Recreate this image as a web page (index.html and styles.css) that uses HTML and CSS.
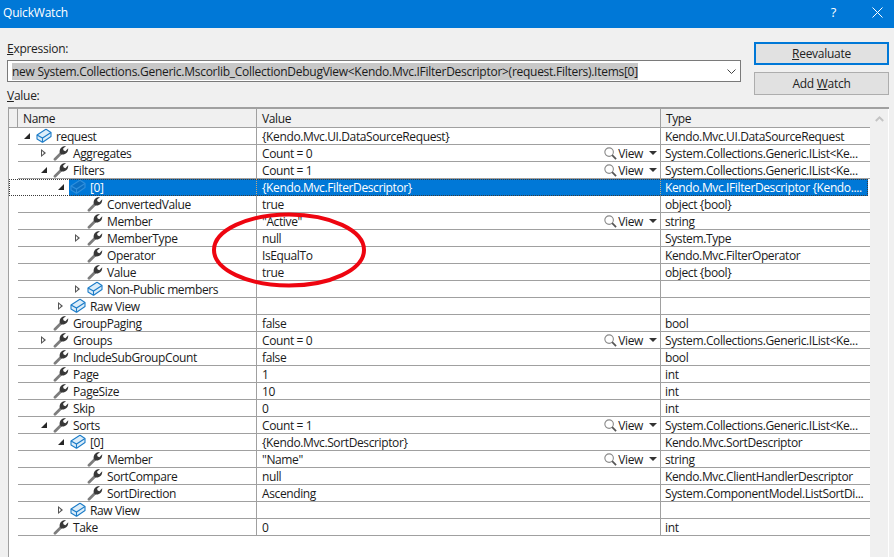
FILE: index.html
```html
<!DOCTYPE html>
<html lang="en">
<head>
<meta charset="utf-8">
<title>QuickWatch</title>
<link rel="stylesheet" href="styles.css">
</head>
<body>
<svg class="defs" width="0" height="0" aria-hidden="true">
  <symbol id="wrench" viewBox="0 0 16 16">
    <path d="M2 14.2 L8 8.2" stroke="#7d7d7d" stroke-width="2.8" stroke-linecap="round" fill="none"/>
    <path d="M6.8 8 C6 4 8.8 0.8 13 1 L10 3.8 L10.7 5.5 L12.4 6.2 L15.2 3.2 C15.5 7.4 12.4 10 8.4 9.4 Z" fill="#383838"/>
  </symbol>
  <symbol id="cube" viewBox="0 0 16 16">
    <path d="M1 7 L9.5 1.5 Q10 1.2 10.5 1.5 L15 4.5 V8.5 L7 14 Q6.5 14.3 6 14 L1 11 Z" fill="#dcedf9" stroke="#1c7cc8" stroke-width="1.1" stroke-linejoin="round"/>
    <path d="M1 7 L6.5 10 L15 4.5 M6.5 10 V14" fill="none" stroke="#1c7cc8" stroke-width="1.1"/>
  </symbol>
  <symbol id="cube-sel" viewBox="0 0 16 16">
    <path d="M1 7 L9.5 1.5 Q10 1.2 10.5 1.5 L15 4.5 V8.5 L7 14 Q6.5 14.3 6 14 L1 11 Z" fill="#0a6fc4" stroke="#2f8fdc" stroke-width="1.1" stroke-linejoin="round"/>
    <path d="M1 7 L6.5 10 L15 4.5 M6.5 10 V14" fill="none" stroke="#2f8fdc" stroke-width="1.1"/>
  </symbol>
  <symbol id="lens" viewBox="0 0 14 14">
    <circle cx="5.5" cy="5.5" r="4.6" fill="#fff" stroke="#8a8a8a" stroke-width="1.2"/>
    <path d="M8.8 8.8 L13 13" stroke="#555" stroke-width="1.9"/>
  </symbol>
</svg>

<header class="titlebar">
  <span class="title">QuickWatch</span>
  <span class="help">?</span>
  <svg class="close" width="11" height="11" viewBox="0 0 11 11"><path d="M.5 .5 L10.5 10.5 M10.5 .5 L.5 10.5" stroke="#fff" stroke-width="1" fill="none"/></svg>
</header>

<main class="dialog">
  <section class="top">
    <div class="fields">
      <label class="label expr-label"><u>E</u>xpression:</label>
      <div class="combo">
        <span class="expr">new System.Collections.Generic.Mscorlib_CollectionDebugView&lt;Kendo.Mvc.IFilterDescriptor&gt;(request.Filters).Items[0]</span>
        <svg class="chev" width="9" height="5" viewBox="0 0 9 5"><path d="M.5 .5 L4.5 4.5 L8.5 .5" stroke="#444" fill="none"/></svg>
      </div>
      <label class="label value-label"><u>V</u>alue:</label>
    </div>
    <div class="buttons">
      <button class="btn primary"><u>R</u>eevaluate</button>
      <button class="btn">Add <u>W</u>atch</button>
    </div>
  </section>

  <section class="grid">
    <div class="rows">
      <div class="row head">
        <div class="gut"></div><div class="c name">Name</div><div class="c val">Value</div><div class="c typ">Type</div>
      </div>

      <div class="row"><div class="gut"></div><div class="c name d0"><i class="tw open"></i><svg class="ic"><use href="#cube"/></svg>request</div><div class="c val">{Kendo.Mvc.UI.DataSourceRequest}</div><div class="c typ">Kendo.Mvc.UI.DataSourceRequest</div></div>
      <div class="row"><div class="gut"></div><div class="c name d1"><i class="tw shut"></i><svg class="ic"><use href="#wrench"/></svg>Aggregates</div><div class="c val">Count = 0<span class="view"><svg class="lens"><use href="#lens"/></svg>View<i class="drop"></i></span></div><div class="c typ">System.Collections.Generic.IList&lt;Ke...</div></div>
      <div class="row"><div class="gut"></div><div class="c name d1"><i class="tw open"></i><svg class="ic"><use href="#wrench"/></svg>Filters</div><div class="c val">Count = 1<span class="view"><svg class="lens"><use href="#lens"/></svg>View<i class="drop"></i></span></div><div class="c typ">System.Collections.Generic.IList&lt;Ke...</div></div>
      <div class="row sel"><div class="gut"></div><div class="c name d2"><i class="tw open"></i><span class="hl"><svg class="ic"><use href="#cube-sel"/></svg>[0]</span></div><div class="c val">{Kendo.Mvc.FilterDescriptor}</div><div class="c typ">Kendo.Mvc.IFilterDescriptor {Kendo....</div></div>
      <div class="row"><div class="gut"></div><div class="c name d3"><i class="tw"></i><svg class="ic"><use href="#wrench"/></svg>ConvertedValue</div><div class="c val">true</div><div class="c typ">object {bool}</div></div>
      <div class="row"><div class="gut"></div><div class="c name d3"><i class="tw"></i><svg class="ic"><use href="#wrench"/></svg>Member</div><div class="c val">"Active"<span class="view"><svg class="lens"><use href="#lens"/></svg>View<i class="drop"></i></span></div><div class="c typ">string</div></div>
      <div class="row"><div class="gut"></div><div class="c name d3"><i class="tw shut"></i><svg class="ic"><use href="#wrench"/></svg>MemberType</div><div class="c val">null</div><div class="c typ">System.Type</div></div>
      <div class="row"><div class="gut"></div><div class="c name d3"><i class="tw"></i><svg class="ic"><use href="#wrench"/></svg>Operator</div><div class="c val">IsEqualTo</div><div class="c typ">Kendo.Mvc.FilterOperator</div></div>
      <div class="row"><div class="gut"></div><div class="c name d3"><i class="tw"></i><svg class="ic"><use href="#wrench"/></svg>Value</div><div class="c val">true</div><div class="c typ">object {bool}</div></div>
      <div class="row"><div class="gut"></div><div class="c name d3"><i class="tw shut"></i><svg class="ic"><use href="#cube"/></svg>Non-Public members</div><div class="c val"></div><div class="c typ"></div></div>
      <div class="row"><div class="gut"></div><div class="c name d2"><i class="tw shut"></i><svg class="ic"><use href="#cube"/></svg>Raw View</div><div class="c val"></div><div class="c typ"></div></div>
      <div class="row"><div class="gut"></div><div class="c name d1"><i class="tw"></i><svg class="ic"><use href="#wrench"/></svg>GroupPaging</div><div class="c val">false</div><div class="c typ">bool</div></div>
      <div class="row"><div class="gut"></div><div class="c name d1"><i class="tw shut"></i><svg class="ic"><use href="#wrench"/></svg>Groups</div><div class="c val">Count = 0<span class="view"><svg class="lens"><use href="#lens"/></svg>View<i class="drop"></i></span></div><div class="c typ">System.Collections.Generic.IList&lt;Ke...</div></div>
      <div class="row"><div class="gut"></div><div class="c name d1"><i class="tw"></i><svg class="ic"><use href="#wrench"/></svg>IncludeSubGroupCount</div><div class="c val">false</div><div class="c typ">bool</div></div>
      <div class="row"><div class="gut"></div><div class="c name d1"><i class="tw"></i><svg class="ic"><use href="#wrench"/></svg>Page</div><div class="c val">1</div><div class="c typ">int</div></div>
      <div class="row"><div class="gut"></div><div class="c name d1"><i class="tw"></i><svg class="ic"><use href="#wrench"/></svg>PageSize</div><div class="c val">10</div><div class="c typ">int</div></div>
      <div class="row"><div class="gut"></div><div class="c name d1"><i class="tw"></i><svg class="ic"><use href="#wrench"/></svg>Skip</div><div class="c val">0</div><div class="c typ">int</div></div>
      <div class="row"><div class="gut"></div><div class="c name d1"><i class="tw open"></i><svg class="ic"><use href="#wrench"/></svg>Sorts</div><div class="c val">Count = 1<span class="view"><svg class="lens"><use href="#lens"/></svg>View<i class="drop"></i></span></div><div class="c typ">System.Collections.Generic.IList&lt;Ke...</div></div>
      <div class="row"><div class="gut"></div><div class="c name d2"><i class="tw open"></i><svg class="ic"><use href="#cube"/></svg>[0]</div><div class="c val">{Kendo.Mvc.SortDescriptor}</div><div class="c typ">Kendo.Mvc.SortDescriptor</div></div>
      <div class="row"><div class="gut"></div><div class="c name d3"><i class="tw"></i><svg class="ic"><use href="#wrench"/></svg>Member</div><div class="c val">"Name"<span class="view"><svg class="lens"><use href="#lens"/></svg>View<i class="drop"></i></span></div><div class="c typ">string</div></div>
      <div class="row"><div class="gut"></div><div class="c name d3"><i class="tw"></i><svg class="ic"><use href="#wrench"/></svg>SortCompare</div><div class="c val">null</div><div class="c typ">Kendo.Mvc.ClientHandlerDescriptor</div></div>
      <div class="row"><div class="gut"></div><div class="c name d3"><i class="tw"></i><svg class="ic"><use href="#wrench"/></svg>SortDirection</div><div class="c val">Ascending</div><div class="c typ">System.ComponentModel.ListSortDi...</div></div>
      <div class="row"><div class="gut"></div><div class="c name d2"><i class="tw shut"></i><svg class="ic"><use href="#cube"/></svg>Raw View</div><div class="c val"></div><div class="c typ"></div></div>
      <div class="row"><div class="gut"></div><div class="c name d1"><i class="tw"></i><svg class="ic"><use href="#wrench"/></svg>Take</div><div class="c val">0</div><div class="c typ">int</div></div>
    </div>
    <aside class="scroll">
      <svg width="9" height="6" viewBox="0 0 9 6"><path d="M.8 5 L4.5 1.4 L8.2 5" stroke="#c4c4c4" stroke-width="2" fill="none"/></svg>
    </aside>
  </section>
</main>

<svg class="circle" width="170" height="90" viewBox="0 0 170 90" aria-hidden="true">
  <ellipse cx="85" cy="45" rx="75" ry="35.5" fill="none" stroke="#ee0510" stroke-width="4"/>
</svg>
</body>
</html>
```

FILE: styles.css
```css
* { box-sizing: border-box; }
html, body { margin: 0; height: 100%; }
body {
  position: relative;
  height: 557px;
  overflow: hidden;
  background: #f0f0f0;
  color: #1a1a1a;
  font: 12px/17px "Open Sans", "Noto Sans", sans-serif;
  letter-spacing: -0.27px;
}
.defs { position: absolute; }
.titlebar {
  height: 28px;
  background: #0078d7;
  color: #fff;
  display: flex;
  align-items: center;
  padding: 0 11px 4px 3px;
}
.title { font-size: 12px; flex: 1; letter-spacing: -0.2px; }
.help { font-size: 13px; margin-right: 36px; }
.dialog { padding: 14px 5px 0 7px; }
.top { display: flex; justify-content: space-between; height: 65px; }
.fields { width: 734px; }
.label { display: block; height: 18px; color: #222; }
.expr-label { line-height: 13px; }
.combo {
  height: 22px;
  background: #fff;
  border: 1px solid #7a7a7a;
  display: flex;
  align-items: center;
  justify-content: space-between;
  padding: 0 4px 0 4px;
}
.expr { background: #c8c8c8; white-space: nowrap; line-height: 17px; }
.chev { flex: none; }
.value-label { margin-top: 5px; }
.buttons { width: 135px; display: flex; flex-direction: column; gap: 7px; }
.btn {
  height: 23px;
  padding: 0;
  background: #e1e1e1;
  border: 1px solid #adadad;
  color: #222;
  font: inherit;
  letter-spacing: inherit;
}
.btn.primary { border: 2px solid #0078d7; }
.grid {
  display: flex;
  margin-left: 1px;
  height: 450px;
  background: #fff;
  border-top: 2px solid #a0a0a0;
  border-left: 1px solid #a0a0a0;
}
.rows { width: 861px; letter-spacing: -0.38px; }
.scroll {
  width: 18px;
  background: #f0f0f0;
  display: flex;
  justify-content: center;
  align-items: flex-start;
  padding-top: 7px;
}
.row {
  display: grid;
  grid-template-columns: 9px 239px 404px 209px;
  height: 17px;
}
.gut { height: 100%; }
.c {
  display: flex;
  align-items: center;
  height: 17px;
  white-space: nowrap;
  overflow: hidden;
  border-bottom: 1px solid #a0a0a0;
}
.name { border-right: 1px solid #a0a0a0; }
.val { border-right: 1px solid #a0a0a0; padding-left: 5px; }
.typ { padding-left: 4px; }
.row.head { height: 19px; background: #f0f0f0; }
.head .gut { border-right: 1px solid #a0a0a0; border-bottom: 1px solid #a0a0a0; }
.head .c { height: 19px; }
.head .name { padding-left: 5px; }
.head .typ { padding-left: 5px; }
.d0 { padding-left: 6px; }
.d1 { padding-left: 23px; }
.d2 { padding-left: 40px; }
.d3 { padding-left: 57px; }
.tw { flex: none; width: 12px; height: 9px; position: relative; display: block; }
.tw.open::before {
  content: "";
  position: absolute;
  left: 0; top: 1px;
  border-style: solid;
  border-width: 0 0 6px 6px;
  border-color: transparent transparent #262626 transparent;
}
.tw.shut::before {
  content: "";
  position: absolute;
  left: 0; top: 0;
  border-style: solid;
  border-width: 4px 0 4px 5px;
  border-color: transparent transparent transparent #555;
}
.tw.shut::after {
  content: "";
  position: absolute;
  left: 1px; top: 2px;
  border-style: solid;
  border-width: 2px 0 2px 2.5px;
  border-color: transparent transparent transparent #fff;
}
.ic { flex: none; width: 16px; height: 16px; margin-right: 4px; }
.view { margin-left: auto; display: flex; align-items: center; padding-right: 3px; }
.lens { width: 13px; height: 13px; margin-right: 1px; }
.drop {
  margin-left: 6px;
  border-style: solid;
  border-width: 4px 4px 0 4px;
  border-color: #333 transparent transparent transparent;
}
.row.sel {
  grid-template-columns: 9px 239px 404px 207px;
  margin-right: 2px;
  background: linear-gradient(#0078d7, #0078d7) no-repeat 60px 0 / 100% 100%;
  color: #fff;
  outline: 1px dotted #3a3a3a;
  outline-offset: -1px;
}
.sel .c { border-bottom-color: transparent; }
.sel .name, .sel .val { border-right: 1px dotted #c9a77a; }
.hl { display: flex; align-items: center; }
.circle { position: absolute; left: 204px; top: 205px; }
u { text-underline-offset: 1px; }
```
